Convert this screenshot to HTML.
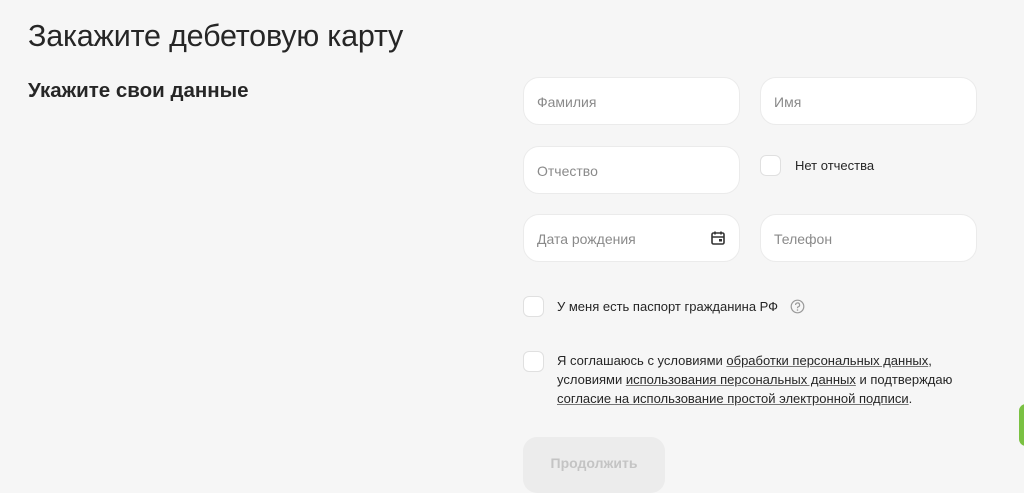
<!DOCTYPE html>
<html><head><meta charset="utf-8"><style>
*{box-sizing:border-box;margin:0;padding:0}
body{width:1024px;height:480px;overflow:hidden;background:#f6f6f6;font-family:"Liberation Sans",sans-serif;color:#222;position:relative}
.a{position:absolute}
h1{position:absolute;left:28px;top:19px;font-size:30.5px;font-weight:500;letter-spacing:-0.2px;color:#262626}
h2{position:absolute;left:28px;top:79px;font-size:20.5px;font-weight:700;color:#262626}
.in{position:absolute;width:217px;height:48px;background:#fff;border:1px solid #ebebeb;border-radius:16px;font-size:14px;color:#8a8a8a;padding:16px 0 0 13px}
.cb{position:absolute;width:21px;height:21px;background:#fff;border:1px solid #e0e0e0;border-radius:6px}
.t{position:absolute;font-size:13px;color:#262626;font-weight:500}
u{text-decoration:underline;text-decoration-color:#777}
</style></head><body>
<h1>Закажите дебетовую карту</h1>
<h2>Укажите свои данные</h2>
<div class="in" style="left:523px;top:77px">Фамилия</div>
<div class="in" style="left:760px;top:77px">Имя</div>
<div class="in" style="left:523px;top:146px">Отчество</div>
<div class="cb" style="left:760px;top:155px"></div>
<div class="t" style="left:795px;top:158px">Нет отчества</div>
<div class="in" style="left:523px;top:214px">Дата рождения</div>
<svg class="a" style="left:710px;top:230px" width="16" height="16" viewBox="0 0 16 16"><rect x="2" y="3" width="12" height="11" rx="1.5" fill="none" stroke="#333" stroke-width="1.6"/><path d="M2 7h12M5 1.5v3M11 1.5v3" stroke="#333" stroke-width="1.6"/><rect x="9" y="9" width="3" height="2.5" fill="#333"/></svg>
<div class="in" style="left:760px;top:214px">Телефон</div>
<div class="cb" style="left:523px;top:296px"></div>
<div class="t" style="left:557px;top:299px">У меня есть паспорт гражданина РФ</div>
<svg class="a" style="left:790px;top:299px" width="15" height="15" viewBox="0 0 15 15"><circle cx="7.5" cy="7.5" r="6.3" fill="none" stroke="#999" stroke-width="1.2"/><path d="M5.6 6a2 2 0 1 1 2.6 1.8c-.5.2-.7.6-.7 1.1v.4" fill="none" stroke="#999" stroke-width="1.2"/><circle cx="7.5" cy="11" r=".8" fill="#999"/></svg>
<div class="cb" style="left:523px;top:351px"></div>
<div class="t" style="left:557px;top:351px;line-height:19px">Я соглашаюсь с условиями <u>обработки персональных данных</u>,<br>условиями <u>использования персональных данных</u> и подтверждаю<br><u>согласие на использование простой электронной подписи</u>.</div>
<div class="a" style="left:523px;top:437px;width:142px;height:56px;background:#ececec;border-radius:14px;color:#c4c4c4;font-size:14px;font-weight:700;text-align:center;padding-top:18px">Продолжить</div>
<div class="a" style="left:1019px;top:404px;width:14px;height:42px;background:#7ac142;border-radius:7px"></div>
</body></html>
